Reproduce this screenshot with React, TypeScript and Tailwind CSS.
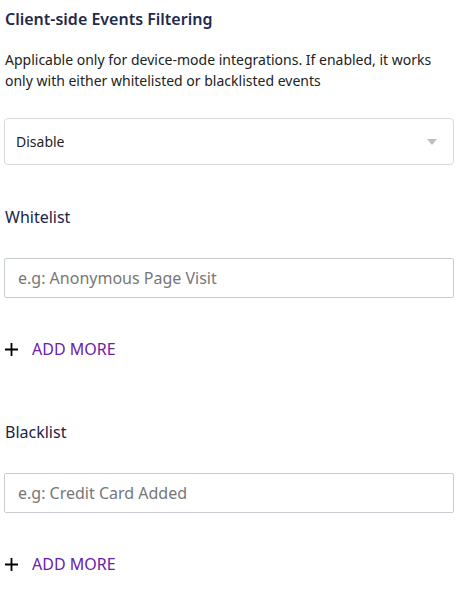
import React from 'react';

function AddMore() {
  return (
    <button className="mt-[39px] flex items-center gap-[14px] h-[24px] text-[16px] font-normal uppercase text-[#6b21a8] leading-[24px]">
      <svg width="13" height="13" viewBox="0 0 13 13" className="ml-[1px]">
        <path d="M6.5 0v13M0 6.5h13" stroke="#000" strokeWidth="1.8" />
      </svg>
      Add More
    </button>
  );
}

function EventList({ label, placeholder, first }: { label: string; placeholder: string; first?: boolean }) {
  return (
    <div className={first ? 'mt-[40px]' : 'mt-[59px]'}>
      <div className="pl-[1px] text-[16px] leading-[24px] font-normal text-[#1a2548]">{label}</div>
      <input
        placeholder={placeholder}
        className="mt-[29px] w-full h-[40px] border border-[#c8cdd4] rounded-[2px] px-[13px] text-[16px] text-[#333] placeholder:text-[#777] outline-none"
      />
      <AddMore />
    </div>
  );
}

export default function App() {
  return (
    <div className="w-[460px] min-h-[590px] bg-white pl-[4px] pr-[6px] pt-[7px] font-['Noto_Sans',sans-serif]">
      <div className="pl-[1px] text-[16px] leading-[24px] font-semibold text-[#1f2a4d]">Client-side Events Filtering</div>
      <p className="mt-[18px] pl-[1px] text-[14px] leading-[21px] text-[#222]">
        Applicable only for device-mode integrations. If enabled, it works only with either whitelisted or blacklisted events
      </p>

      <div className="mt-[27px] h-[47px] border border-[#d9d9d9] rounded-[4px] flex items-center justify-between pl-[11px] pr-[16px] text-[14px] text-[#222]">
        <span>Disable</span>
        <svg width="10" height="6" viewBox="0 0 10 6">
          <path d="M0 0h10L5 6z" fill="#bfbfbf" />
        </svg>
      </div>

      <EventList label="Whitelist" placeholder="e.g: Anonymous Page Visit" first />
      <EventList label="Blacklist" placeholder="e.g: Credit Card Added" />
    </div>
  );
}
